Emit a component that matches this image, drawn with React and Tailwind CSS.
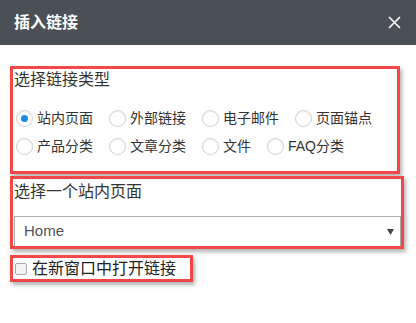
import { useState } from 'react';

const font = { fontFamily: '"Liberation Sans", "Noto Sans CJK SC", sans-serif' };

const types = [
  ['site', '站内页面'],
  ['external', '外部链接'],
  ['email', '电子邮件'],
  ['anchor', '页面锚点'],
  ['product', '产品分类'],
  ['article', '文章分类'],
  ['file', '文件'],
  ['faq', 'FAQ分类'],
];

function Radio({ checked, label, onClick }) {
  return (
    <div className="flex items-center mr-[16px] cursor-pointer" onClick={onClick}>
      <span className="w-[17px] h-[17px] rounded-full border border-[#cfcfcf] bg-white flex items-center justify-center shadow-[inset_0_1px_1px_rgba(0,0,0,0.06)]">
        {checked && <span className="w-[7px] h-[7px] rounded-full bg-[#1a8be0]"></span>}
      </span>
      <span className="ml-[4px] text-[14px] leading-[20px] text-[#333]">{label}</span>
    </div>
  );
}

export default function App() {
  const [type, setType] = useState('site');
  const [newWindow, setNewWindow] = useState(false);

  return (
    <div className="w-[416px] h-[323px] bg-white overflow-hidden" style={font}>
      <div className="h-[45px] bg-[#4b4f56] flex items-center justify-between pl-[14px] pr-[14px]">
        <h1 className="text-white text-[16px] font-bold">插入链接</h1>
        <svg width="13" height="13" viewBox="0 0 13 13" className="mr-[1px]">
          <path d="M1 1L12 12M12 1L1 12" stroke="#fff" strokeWidth="1.6" />
        </svg>
      </div>

      <div className="ml-[10px] mt-[21px] w-[390px] h-[108px] border-[3px] border-[#f24848] shadow-[2px_3px_4px_rgba(0,0,0,0.3)]">
        <div className="pl-[1px] h-[22px] leading-[22px] text-[16px] text-[#333]">选择链接类型</div>
        <div className="mt-[13px] pl-[3px]">
          <div className="h-[28px] flex items-center">
            {types.slice(0, 4).map(([k, l]) => (
              <Radio key={k} label={l} checked={type === k} onClick={() => setType(k)} />
            ))}
          </div>
          <div className="h-[28px] flex items-center">
            {types.slice(4).map(([k, l]) => (
              <Radio key={k} label={l} checked={type === k} onClick={() => setType(k)} />
            ))}
          </div>
        </div>
      </div>

      <div className="ml-[10px] mt-[2px] w-[394px] h-[73px] border-[3px] border-[#f24848] shadow-[2px_3px_4px_rgba(0,0,0,0.3)] overflow-hidden">
        <div className="pl-[1px] pt-[2px] h-[24px] leading-[22px] text-[16px] text-[#333]">选择一个站内页面</div>
        <div className="mt-[13px] ml-[1px] h-[31px] border border-[#aaa] bg-white flex items-center justify-between pl-[9px] pr-[6px]">
          <span className="text-[15px] text-[#555]">Home</span>
          <svg width="7" height="6" viewBox="0 0 7 6">
            <path d="M0 0H7L3.5 6Z" fill="#444" />
          </svg>
        </div>
      </div>

      <div className="ml-[10px] mt-[6px] w-[183px] h-[27px] border-[3px] border-[#f24848] shadow-[2px_3px_4px_rgba(0,0,0,0.3)] flex items-center">
        <div className="flex items-center pl-[2px] cursor-pointer" onClick={() => setNewWindow(!newWindow)}>
          <span className="w-[12px] h-[12px] rounded-[2px] border border-[#aaa] bg-[#f4f4f4] flex items-center justify-center">
            {newWindow && <span className="w-[6px] h-[6px] bg-[#333]"></span>}
          </span>
          <span className="ml-[5px] text-[16px] leading-[20px] text-[#222]">在新窗口中打开链接</span>
        </div>
      </div>
    </div>
  );
}
